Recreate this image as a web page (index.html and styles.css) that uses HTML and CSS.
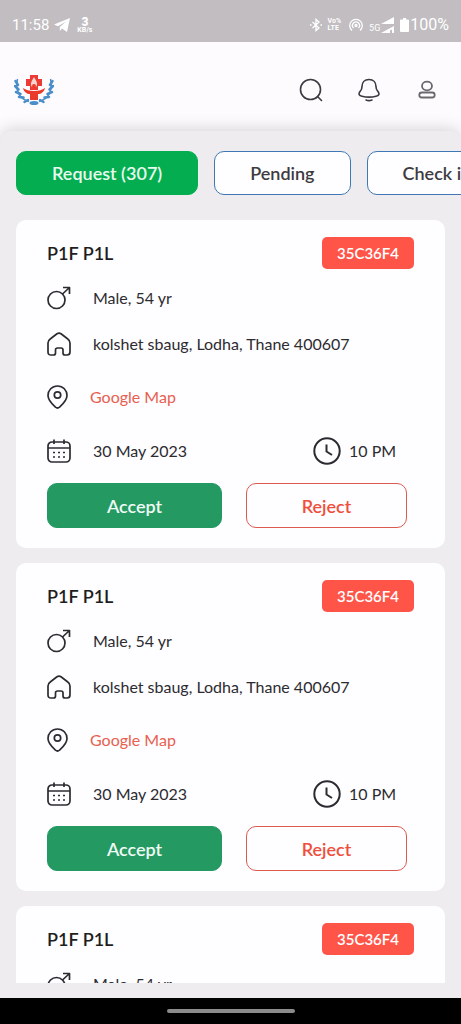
FILE: index.html
```html
<!doctype html>
<html lang="en">
<head>
    <meta charset="UTF-8">
    <meta name="viewport" content="width=device-width, initial-scale=1.0">
    <title>Requests</title>
    <link rel="stylesheet" href="styles.css">
</head>
<body>

<svg class="sprite" aria-hidden="true">
    <symbol id="male" viewBox="0 0 24 24">
        <circle cx="9.5" cy="14" r="8.5"/>
        <path d="M15.500 8L22.500 1.500M16 1.500H22.500V8"/>
    </symbol>
    <symbol id="home" viewBox="0 0 24 24">
        <path d="M3.2 7L10 1.8Q12 .4 14 1.8L20.8 7Q23 8.6 23 11V20Q23 23 20 23H18Q16 23 16 21V18Q16 16 14 16H10.500Q8.500 16 8.500 18V21Q8.500 23 6.500 23H4Q1 23 1 20V11Q1 8.600 3.200 7Z"/>
    </symbol>
    <symbol id="pin" viewBox="0 0 24 24">
        <path d="M10.500 1C5 1 1 5.200 1 10.500C1 15.500 5 19 8.500 22.200Q10.500 23.800 12.500 22.200C16 19 20 15.500 20 10.500C20 5.200 16 1 10.500 1Z"/>
        <circle cx="10.500" cy="10" r="3.200"/>
    </symbol>
    <symbol id="calendar" viewBox="0 0 24 24">
        <rect x="1" y="3" width="22" height="20" rx="4"/>
        <path d="M1 9H23M7 .5V5M17 .5V5"/>
        <path class="dots" d="M6 13.500H8M11 13.500H13M16 13.500H18M6 18H8M11 18H13M16 18H18"/>
    </symbol>
    <symbol id="clock" viewBox="0 0 28 28">
        <circle cx="14" cy="14" r="12.700"/>
        <path d="M13.500 7.500V14.500L19 18"/>
    </symbol>
</svg>

<div class="status">
    <span class="time">11:58</span>
    <svg class="telegram" viewBox="0 0 16 14"><path d="M0 6.500L16 0L13 14L8 10.500L5.800 13V9L12 3.500L4 8.200Z"/></svg>
    <span class="speed"><b>3</b>KB/s</span>
    <svg class="bluetooth" viewBox="0 0 14 16"><path d="M3.500 5L10 11L7 13.500V2.500L10 5L3.500 11M1 8H2.500M11.500 8H13"/></svg>
    <span class="lte">Vo%<br>LTE</span>
    <svg class="hotspot" viewBox="0 0 14 14"><path d="M3 12.500A6.300 6.300 0 1 1 11 12.500M4.500 10A3.500 3.500 0 1 1 9.500 10"/><circle cx="7" cy="7.500" r="1"/></svg>
    <span class="net">5G</span>
    <svg class="signal" viewBox="0 0 13 16"><path d="M0 7L13 0V7ZM0 16L13 9V16H11V12.500L9 13.500V16Z"/></svg>
    <svg class="battery" viewBox="0 0 9 14"><path d="M3 0H6V1.500H8Q9 1.500 9 2.500V13Q9 14 8 14H1Q0 14 0 13V2.500Q0 1.500 1 1.500H3Z"/></svg>
    <span class="percent">100%</span>
</div>

<header class="header">
    <svg class="logo" viewBox="0 0 40 32">
        <g class="wreath">
            <path d="M3.500 5C1 16 5 25 15 27.500M36.500 5C39 16 35 25 25 27.500"/>
            <path class="leaves" d="M1.500 7L4 11M1 12L4.500 15.500M2 18L6.500 20M5 23L9.500 23.500M10.500 28L14 26M38.500 7L36 11M39 12L35.500 15.500M38 18L33.500 20M35 23L30.500 23.500M29.500 28L26 26"/>
        </g>
        <ellipse class="base" cx="20" cy="29" rx="4.500" ry="2"/>
        <path class="cross" d="M16 1H24V5H28V12H24V16H16V12H12V5H16Z"/>
        <path class="flame" d="M20 3C17 8 16 10 18 13H22C24 10 23 8 20 3Z"/>
        <path class="person" d="M9 14C12 16 15 17 20 17C25 17 28 16 31 14C30 18 27 20 24 20V26H16V20C13 20 10 18 9 14Z"/>
        <circle class="person" cx="20" cy="12" r="2"/>
    </svg>
    <button class="icon-btn" aria-label="Search">
        <svg viewBox="0 0 24 24"><circle cx="11.500" cy="11.500" r="10"/><path d="M18.500 18.500L22.500 22.500"/></svg>
    </button>
    <button class="icon-btn" aria-label="Notifications">
        <svg viewBox="0 0 24 24"><path d="M12 1.500C7.500 1.500 5 4.500 5 8.500C5 11.500 4.200 12 3 13.500C1.200 16 2 17.700 5 18.300C9 19.300 15 19.300 19 18.300C22 17.700 22.800 16 21 13.500C19.800 12 19 11.500 19 8.500C19 4.500 16.500 1.500 12 1.500ZM9 22Q12 23.300 15 22"/></svg>
    </button>
    <button class="icon-btn profile" aria-label="Profile">
        <svg viewBox="0 0 24 24"><ellipse cx="12" cy="8" rx="5" ry="4.300"/><rect x="4.300" y="14.500" width="15.400" height="5" rx="2.500"/></svg>
    </button>
</header>

<main class="main">
    <nav class="tabs">
        <button class="tab active">Request (307)</button>
        <button class="tab">Pending</button>
        <button class="tab">Check in</button>
    </nav>

    <div class="list">
        <article class="card">
            <div class="card-head">
                <h2>P1F P1L</h2>
                <span class="badge">35C36F4</span>
            </div>
            <div class="row"><svg class="icon"><use href="#male"/></svg>Male, 54 yr</div>
            <div class="row"><svg class="icon"><use href="#home"/></svg>kolshet sbaug, Lodha, Thane 400607</div>
            <div class="row map"><svg class="icon"><use href="#pin"/></svg><a href="#map">Google Map</a></div>
            <div class="row date">
                <svg class="icon"><use href="#calendar"/></svg>30 May 2023
                <span class="hour"><svg class="icon"><use href="#clock"/></svg>10 PM</span>
            </div>
            <div class="actions">
                <button class="accept">Accept</button>
                <button class="reject">Reject</button>
            </div>
        </article>

        <article class="card">
            <div class="card-head">
                <h2>P1F P1L</h2>
                <span class="badge">35C36F4</span>
            </div>
            <div class="row"><svg class="icon"><use href="#male"/></svg>Male, 54 yr</div>
            <div class="row"><svg class="icon"><use href="#home"/></svg>kolshet sbaug, Lodha, Thane 400607</div>
            <div class="row map"><svg class="icon"><use href="#pin"/></svg><a href="#map">Google Map</a></div>
            <div class="row date">
                <svg class="icon"><use href="#calendar"/></svg>30 May 2023
                <span class="hour"><svg class="icon"><use href="#clock"/></svg>10 PM</span>
            </div>
            <div class="actions">
                <button class="accept">Accept</button>
                <button class="reject">Reject</button>
            </div>
        </article>

        <article class="card">
            <div class="card-head">
                <h2>P1F P1L</h2>
                <span class="badge">35C36F4</span>
            </div>
            <div class="row"><svg class="icon"><use href="#male"/></svg>Male, 54 yr</div>
        </article>
    </div>
</main>

<div class="navbar"><span></span></div>

</body>
</html>
```
FILE: styles.css
```css
* {
    box-sizing: border-box;
}
body {
    margin: 0;
    height: 100vh;
    display: flex;
    flex-direction: column;
    overflow: hidden;
    background: #fefbff;
    color: #2c2b30;
    font: 16px/20px Lato, sans-serif;
}
button {
    font: inherit;
    cursor: pointer;
}
.sprite {
    display: none;
}

/* status bar */
.status {
    flex: none;
    height: 42px;
    padding: 8px 12px 0;
    display: flex;
    align-items: center;
    background: #c1bdc1;
    color: #fff;
}
.status svg {
    fill: #fff;
}
.time,
.percent {
    font: 16px/20px Roboto, sans-serif;
}
.time {
    font-size: 15px;
}
.telegram {
    width: 16px;
    height: 14px;
    margin-left: 5px;
}
.speed {
    margin-left: 7px;
    font: bold 7px/7px Roboto, sans-serif;
    text-align: center;
}
.speed b {
    display: block;
    font-size: 12px;
    line-height: 10px;
}
.status .bluetooth,
.status .hotspot {
    fill: none;
    stroke: #fff;
    stroke-width: 1.3;
}
.bluetooth {
    width: 14px;
    height: 16px;
    margin-left: auto;
}
.lte {
    margin-left: 5px;
    font: bold 7px/7px Roboto, sans-serif;
}
.hotspot {
    width: 14px;
    height: 14px;
    margin-left: 8px;
}
.net {
    margin: 6px 1px 0 6px;
    font: 9px/10px Roboto, sans-serif;
}
.signal {
    width: 13px;
    height: 16px;
}
.battery {
    width: 9px;
    height: 14px;
    margin: 0 1px 0 6px;
}

/* header */
.header {
    flex: none;
    height: 89px;
    padding: 6px 22px 0 14px;
    display: flex;
    align-items: center;
    gap: 34px;
}
.logo {
    width: 40px;
    height: 32px;
    margin-right: auto;
}
.wreath {
    fill: none;
    stroke: #4a8fca;
    stroke-width: 1.5;
}
.leaves {
    stroke-width: 2.5;
    stroke-linecap: round;
}
.base {
    fill: #4a8fca;
}
.cross {
    fill: #ee3a34;
}
.flame {
    fill: #fbd5cd;
}
.person {
    fill: #ea3a2c;
}
.icon-btn {
    width: 24px;
    height: 24px;
    padding: 0;
    border: 0;
    background: none;
}
.icon-btn svg {
    display: block;
    fill: none;
    stroke: #3d3940;
    stroke-width: 1.6;
    stroke-linecap: round;
}
.icon-btn.profile svg {
    stroke: #6b686d;
    stroke-width: 1.8;
}

/* content */
.main {
    flex: 1;
    min-height: 0;
    padding: 20px 0 15px;
    display: flex;
    flex-direction: column;
    gap: 25px;
    border-radius: 12px 12px 0 0;
    background: #eeecef;
    box-shadow: 0 -2px 16px rgba(0, 0, 0, 0.16);
}
.tabs {
    flex: none;
    display: flex;
    gap: 16px;
    padding-left: 16px;
    overflow: hidden;
}
.tab {
    flex: none;
    height: 44px;
    padding: 0 35px;
    border: 1px solid #3f78b5;
    border-radius: 10px;
    background: #fefdff;
    color: #3d3b40;
    font-size: 18px;
    font-weight: 600;
}
.tab.active {
    border-color: #04ae50;
    background: #04ae50;
    color: #e9fbef;
}
.list {
    flex: 1;
    min-height: 0;
    padding: 0 16px;
    overflow-y: auto;
    scrollbar-width: none;
}
.card {
    margin-bottom: 15px;
    padding: 17px 31px 20px;
    border-radius: 10px;
    background: #fefdff;
}
.card-head {
    display: flex;
    justify-content: space-between;
    align-items: center;
    margin-bottom: 6px;
}
.card h2 {
    margin: 0;
    color: #1e1d21;
    font-size: 18px;
    font-weight: 600;
}
.badge {
    padding: 6px 15px;
    border-radius: 5px;
    background: #ff5549;
    color: #fff;
    font-size: 15px;
    font-weight: 600;
}
.row {
    height: 46px;
    display: flex;
    align-items: center;
}
.row.map {
    height: 60px;
}
.row.date {
    height: 48px;
}
.icon {
    flex: none;
    width: 24px;
    height: 24px;
    margin-right: 22px;
    fill: none;
    stroke: #2c2b30;
    stroke-width: 1.7;
    stroke-linejoin: round;
}
.map .icon {
    margin-right: 19px;
}
.dots {
    stroke-dasharray: 2 3;
}
.row a {
    color: #e8604f;
    text-decoration: none;
}
.hour {
    width: 101px;
    margin-left: auto;
    display: flex;
    align-items: center;
}
.hour .icon {
    width: 28px;
    height: 28px;
    margin-right: 8px;
    stroke-width: 2;
}
.actions {
    display: grid;
    grid-template-columns: 175fr 161fr;
    gap: 24px;
    margin-top: 8px;
    padding-right: 7px;
}
.actions button {
    height: 45px;
    border: 1px solid #249962;
    border-radius: 10px;
    background: #249962;
    color: #effcf5;
    font-size: 18px;
    font-weight: 600;
}
.actions .reject {
    border-color: #dc5b4e;
    background: none;
    color: #ee4f3c;
}

/* gesture bar */
.navbar {
    flex: none;
    height: 26px;
    display: flex;
    justify-content: center;
    align-items: center;
    background: #000;
}
.navbar span {
    width: 128px;
    height: 4px;
    border-radius: 2px;
    background: #8b8b8b;
}
```
